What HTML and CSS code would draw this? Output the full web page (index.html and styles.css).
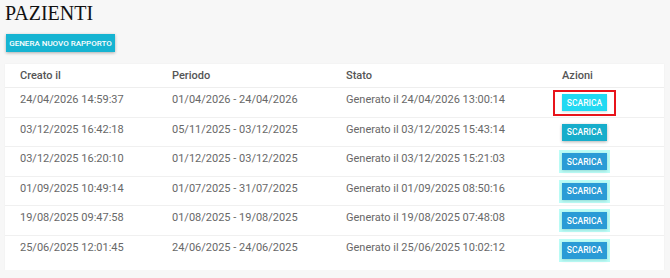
FILE: index.html
```html
<!DOCTYPE html>
<html>
<head>
  <title>Pazienti - Rapporti</title>
  <link rel="stylesheet" href="styles.css">
</head>
<body>
  <h1 class="title">PAZIENTI</h1>

  <button class="btn btn-main">Genera nuovo rapporto</button>

  <div class="card">
    <table class="report-table">
      <colgroup>
        <col class="col-created">
        <col class="col-period">
        <col class="col-state">
        <col class="col-actions">
      </colgroup>
      <thead>
        <tr>
          <th>Creato il</th>
          <th>Periodo</th>
          <th>Stato</th>
          <th>Azioni</th>
        </tr>
      </thead>
      <tbody>
        <tr>
          <td>24/04/2026 14:59:37</td>
          <td>01/04/2026 - 24/04/2026</td>
          <td>Generato il 24/04/2026 13:00:14</td>
          <td><span class="marked"><button class="btn btn-row btn-active">Scarica</button></span></td>
        </tr>
        <tr>
          <td>03/12/2025 16:42:18</td>
          <td>05/11/2025 - 03/12/2025</td>
          <td>Generato il 03/12/2025 15:43:14</td>
          <td><button class="btn btn-row">Scarica</button></td>
        </tr>
        <tr>
          <td>03/12/2025 16:20:10</td>
          <td>01/12/2025 - 03/12/2025</td>
          <td>Generato il 03/12/2025 15:21:03</td>
          <td><button class="btn btn-row btn-focus">Scarica</button></td>
        </tr>
        <tr>
          <td>01/09/2025 10:49:14</td>
          <td>01/07/2025 - 31/07/2025</td>
          <td>Generato il 01/09/2025 08:50:16</td>
          <td><button class="btn btn-row btn-focus">Scarica</button></td>
        </tr>
        <tr>
          <td>19/08/2025 09:47:58</td>
          <td>01/08/2025 - 19/08/2025</td>
          <td>Generato il 19/08/2025 07:48:08</td>
          <td><button class="btn btn-row btn-focus">Scarica</button></td>
        </tr>
        <tr class="last">
          <td>25/06/2025 12:01:45</td>
          <td>24/06/2025 - 24/06/2025</td>
          <td>Generato il 25/06/2025 10:02:12</td>
          <td><button class="btn btn-row btn-focus">Scarica</button></td>
        </tr>
      </tbody>
    </table>
  </div>
</body>
</html>
```

FILE: styles.css
```css
body {
  margin: 0;
  padding: 0 6px 0 5px;
  background-color: #f7f7f7;
  font-family: Roboto, "Liberation Sans", Arial, sans-serif;
}

.title {
  margin: 0;
  padding-top: 1px;
  font-family: "Liberation Serif", "Times New Roman", serif;
  font-weight: normal;
  font-size: 20px;
  line-height: 24px;
  color: #111;
}

.btn {
  border: none;
  color: #fff;
  font-family: Roboto, "Liberation Sans", Arial, sans-serif;
  font-weight: 500;
  text-transform: uppercase;
  cursor: pointer;
  padding: 0;
}

.btn-main {
  display: block;
  margin: 9px 0 0 1px;
  width: 109px;
  height: 18px;
  font-size: 8px;
  background-color: #16b4d2;
  box-shadow: 0 1px 3px rgba(0, 0, 0, 0.3);
}

.card {
  margin-top: 12px;
  background-color: #fff;
  padding: 0 0 5px 0;
  box-shadow: 0 0 2px rgba(0, 0, 0, 0.04);
}

.report-table {
  width: 100%;
  border-collapse: collapse;
  table-layout: fixed;
}

.col-created { width: 167px; }
.col-period { width: 174px; }
.col-state { width: 216px; }

.report-table th,
.report-table td {
  text-align: left;
  padding: 0;
}

.report-table th:first-child,
.report-table td:first-child {
  padding-left: 15px;
}

.report-table th {
  height: 23px;
  font-size: 11px;
  font-weight: 500;
  color: #555;
  vertical-align: middle;
  border-bottom: 1px solid #eee;
}

.report-table td {
  height: 29.5px;
  padding-top: 5px;
  font-size: 11px;
  line-height: 14px;
  color: #686868;
  vertical-align: top;
  border-bottom: 1px solid #f0f0f0;
  box-sizing: border-box;
}

.report-table tr.last td {
  border-bottom: none;
}

.btn-row {
  width: 45px;
  height: 17px;
  margin-top: 1px;
  font-size: 8.5px;
  background-color: #17adcb;
  box-shadow: 0 1px 3px rgba(0, 0, 0, 0.3);
}

.btn-active {
  background-color: #22d9f2;
  box-shadow: 0 1px 2px rgba(0, 0, 0, 0.15);
}

.btn-focus {
  background-color: #2a9bd6;
  box-shadow: 0 0 0 3px rgba(120, 252, 240, 0.5), 0 1px 3px rgba(0, 0, 0, 0.3);
}

.marked {
  position: relative;
  display: inline-block;
}

.marked::after {
  content: "";
  position: absolute;
  top: -3px;
  left: -9px;
  right: -9px;
  bottom: -5px;
  border: 2px solid #e8141b;
}
```
